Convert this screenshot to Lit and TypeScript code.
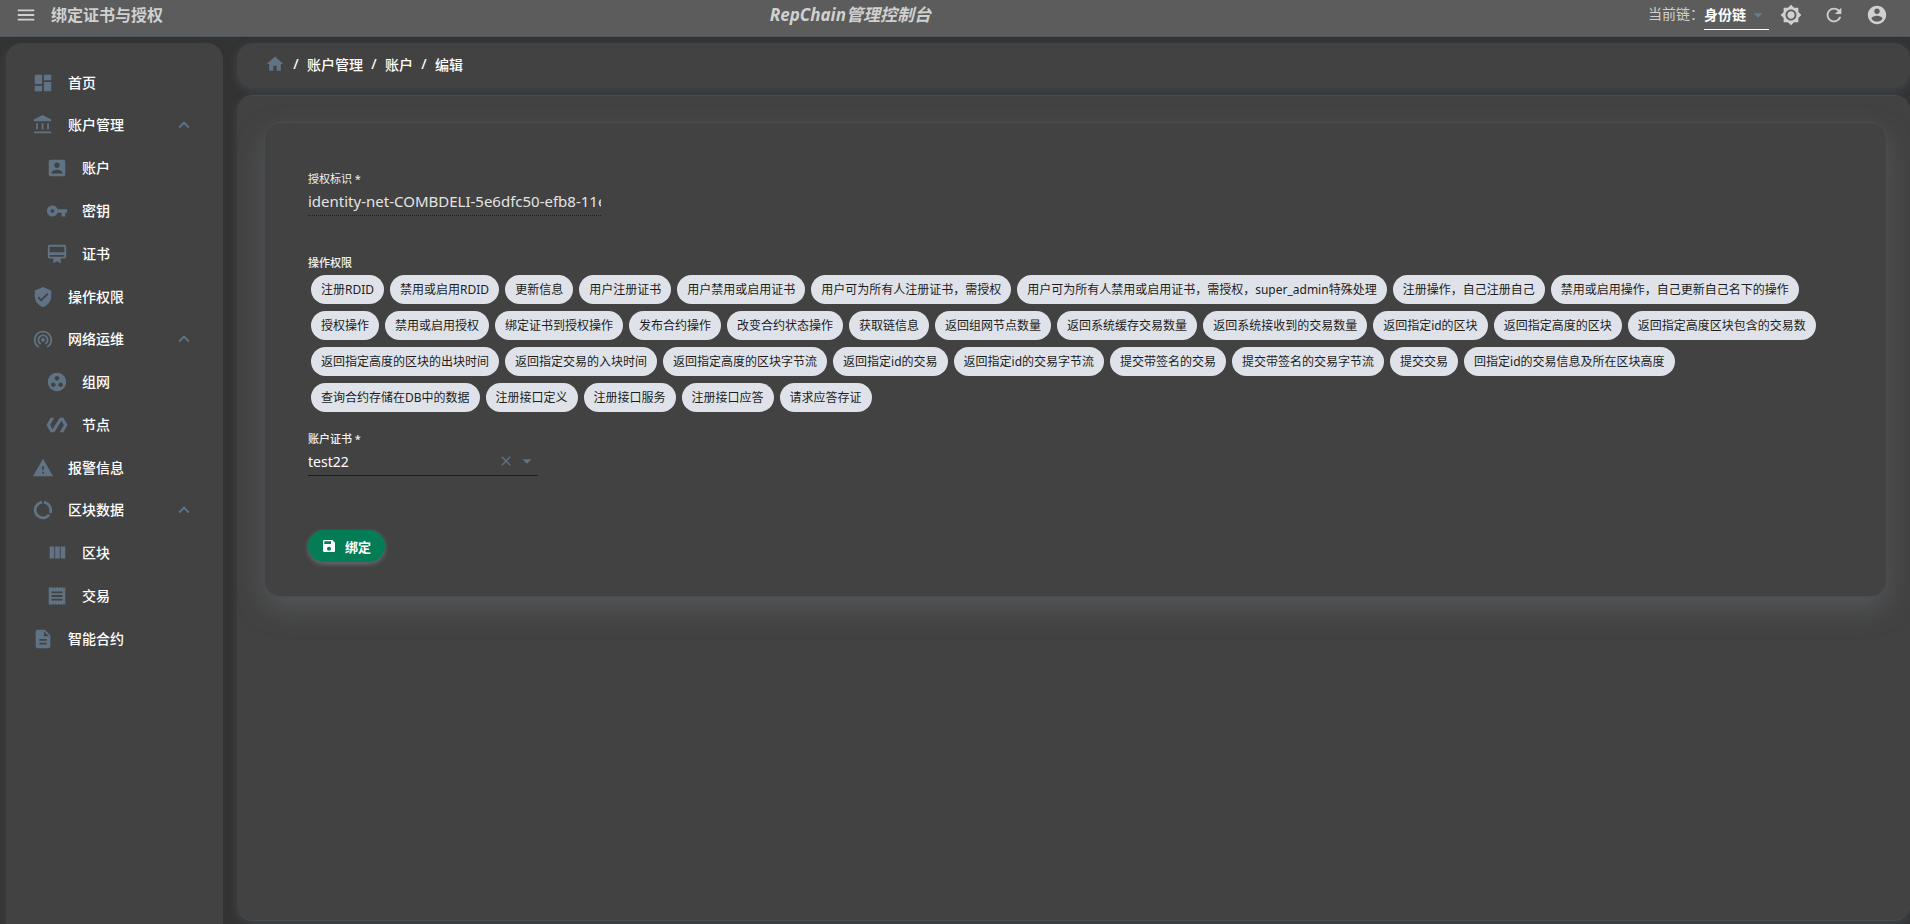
import { LitElement, html, css, svg, nothing } from "lit";
import { customElement, property, state } from "lit/decorators.js";

const ICONS: Record<string, string> = {
  menu: "M3 18h18v-2H3v2zm0-5h18v-2H3v2zm0-7v2h18V6H3z",
  home: "M10 20v-6h4v6h5v-8h3L12 3 2 12h3v8z",
  dashboard: "M3 13h8V3H3v10zm0 8h8v-6H3v6zm10 0h8V11h-8v10zm0-18v6h8V3h-8z",
  bank: "M6.5 10h-2v7h2v-7zm6 0h-2v7h2v-7zm8.5 9H2v2h19v-2zm-2.5-9h-2v7h2v-7zM11.5 1L2 6v2h19V6l-9.5-5z",
  accountBox: "M3 5v14c0 1.1.89 2 2 2h14c1.1 0 2-.9 2-2V5c0-1.1-.9-2-2-2H5c-1.11 0-2 .9-2 2zm12 4c0 1.66-1.34 3-3 3s-3-1.34-3-3 1.34-3 3-3 3 1.34 3 3zm-9 8c0-2 4-3.1 6-3.1s6 1.1 6 3.1v1H6v-1z",
  key: "M12.65 10C11.83 7.67 9.61 6 7 6c-3.31 0-6 2.69-6 6s2.69 6 6 6c2.61 0 4.83-1.67 5.65-4H17v4h4v-4h2v-4H12.65zM7 14c-1.1 0-2-.9-2-2s.9-2 2-2 2 .9 2 2-.9 2-2 2z",
  certificate: "M20 2H4c-1.11 0-2 .89-2 2v11c0 1.11.89 2 2 2h4v5l4-2 4 2v-5h4c1.11 0 2-.89 2-2V4c0-1.11-.89-2-2-2zm0 13H4v-2h16v2zm0-5H4V4h16v6z",
  shield: "M12 1L3 5v6c0 5.55 3.84 10.74 9 12 5.16-1.26 9-6.45 9-12V5l-9-4zm-2 16l-4-4 1.41-1.41L10 14.17l6.59-6.59L18 9l-8 8z",
  tethering: "M12 11c-1.1 0-2 .9-2 2s.9 2 2 2 2-.9 2-2-.9-2-2-2zm6 2c0-3.31-2.69-6-6-6s-6 2.69-6 6c0 2.22 1.21 4.15 3 5.19l1-1.74c-1.19-.7-2-1.97-2-3.45 0-2.21 1.79-4 4-4s4 1.79 4 4c0 1.48-.81 2.75-2 3.45l1 1.74c1.79-1.04 3-2.97 3-5.19zM12 3C6.48 3 2 7.48 2 13c0 3.7 2.01 6.92 4.99 8.65l1-1.73C5.61 18.53 4 15.96 4 13c0-4.42 3.58-8 8-8s8 3.58 8 8c0 2.96-1.61 5.53-4 6.92l1 1.73c2.99-1.73 5-4.95 5-8.65 0-5.52-4.48-10-10-10z",
  groupWork: "M12 2C6.48 2 2 6.48 2 12s4.48 10 10 10 10-4.48 10-10S17.52 2 12 2zM8 17.5c-1.38 0-2.5-1.12-2.5-2.5s1.12-2.5 2.5-2.5 2.5 1.12 2.5 2.5-1.12 2.5-2.5 2.5zM9.5 8c0-1.38 1.12-2.5 2.5-2.5s2.5 1.12 2.5 2.5-1.12 2.5-2.5 2.5S9.5 9.38 9.5 8zm6.5 9.5c-1.38 0-2.5-1.12-2.5-2.5s1.12-2.5 2.5-2.5 2.5 1.12 2.5 2.5-1.12 2.5-2.5 2.5z",
  polymer: "M19 4h-4L7.11 16.63 4.5 12 9 4H5L.5 12 5 20h4l7.89-12.63L19.5 12 15 20h4l4.5-8z",
  warning: "M1 21h22L12 2 1 21zm12-3h-2v-2h2v2zm0-4h-2v-4h2v4z",
  dataUsage: "M13 2.05v3.03c3.39.49 6 3.39 6 6.92 0 .9-.18 1.75-.48 2.54l2.6 1.53c.56-1.24.88-2.62.88-4.07 0-5.18-3.95-9.45-9-9.95zM12 19c-3.87 0-7-3.13-7-7 0-3.53 2.61-6.43 6-6.92V2.05c-5.06.5-9 4.76-9 9.95 0 5.52 4.47 10 9.99 10 3.31 0 6.24-1.61 8.06-4.09l-2.6-1.53C16.17 17.98 14.21 19 12 19z",
  columns: "M10 18h5V5h-5v13zm-6 0h5V5H4v13zM16 5v13h5V5h-5z",
  receipt: "M18 17H6v-2h12v2zm0-4H6v-2h12v2zm0-4H6V7h12v2zM3 22l1.5-1.5L6 22l1.5-1.5L9 22l1.5-1.5L12 22l1.5-1.5L15 22l1.5-1.5L18 22l1.5-1.5L21 22V2l-1.5 1.5L18 2l-1.5 1.5L15 2l-1.5 1.5L12 2l-1.5 1.5L9 2 7.5 3.5 6 2 4.5 3.5 3 2v20z",
  description: "M14 2H6c-1.1 0-1.99.9-1.99 2L4 20c0 1.1.89 2 1.99 2H18c1.1 0 2-.9 2-2V8l-6-6zm2 16H8v-2h8v2zm0-4H8v-2h8v2zm-3-5V3.5L18.5 9H13z",
  brightness: "M20 8.69V4h-4.69L12 .69 8.69 4H4v4.69L.69 12 4 15.31V20h4.69L12 23.31 15.31 20H20v-4.69L23.31 12 20 8.69zM12 18c-3.31 0-6-2.69-6-6s2.69-6 6-6 6 2.69 6 6-2.69 6-6 6zm0-10c-2.21 0-4 1.79-4 4s1.79 4 4 4 4-1.79 4-4-1.79-4-4-4z",
  refresh: "M17.65 6.35C16.2 4.9 14.21 4 12 4c-4.42 0-7.99 3.58-7.99 8s3.57 8 7.99 8c3.73 0 6.84-2.55 7.73-6h-2.08c-.82 2.33-3.04 4-5.65 4-3.31 0-6-2.69-6-6s2.69-6 6-6c1.66 0 3.14.69 4.22 1.78L13 11h7V4l-2.35 2.35z",
  account: "M12 2C6.48 2 2 6.48 2 12s4.48 10 10 10 10-4.48 10-10S17.52 2 12 2zm0 3c1.66 0 3 1.34 3 3s-1.34 3-3 3-3-1.34-3-3 1.34-3 3-3zm0 14.2c-2.5 0-4.71-1.28-6-3.22.03-1.99 4-3.08 6-3.08 1.99 0 5.97 1.09 6 3.08-1.29 1.94-3.5 3.22-6 3.22z",
  expandLess: "M12 8l-6 6 1.41 1.41L12 10.83l4.59 4.58L18 14z",
  dropDown: "M7 10l5 5 5-5z",
  close: "M19 6.41L17.59 5 12 10.59 6.41 5 5 6.41 10.59 12 5 17.59 6.41 19 12 13.41 17.59 19 19 17.59 13.41 12z",
  save: "M17 3H5c-1.11 0-2 .9-2 2v14c0 1.1.89 2 2 2h14c1.1 0 2-.9 2-2V7l-4-4zm-5 16c-1.66 0-3-1.34-3-3s1.34-3 3-3 3 1.34 3 3-1.34 3-3 3zm3-10H5V5h10v4z",
};

@customElement("rc-icon")
class RcIcon extends LitElement {
  @property() name = "";

  static styles = css`
    :host {
      display: block;
      flex: none;
      width: 22px;
      height: 22px;
    }
    svg {
      display: block;
      width: 100%;
      height: 100%;
      fill: currentColor;
    }
  `;

  render() {
    return html`<svg viewBox="0 0 24 24" aria-hidden="true">
      ${svg`<path d=${ICONS[this.name] ?? ""}></path>`}
    </svg>`;
  }
}

interface NavItem {
  text: string;
  icon: string;
  children?: NavItem[];
}

const NAV: NavItem[] = [
  { text: "首页", icon: "dashboard" },
  {
    text: "账户管理",
    icon: "bank",
    children: [
      { text: "账户", icon: "accountBox" },
      { text: "密钥", icon: "key" },
      { text: "证书", icon: "certificate" },
    ],
  },
  { text: "操作权限", icon: "shield" },
  {
    text: "网络运维",
    icon: "tethering",
    children: [
      { text: "组网", icon: "groupWork" },
      { text: "节点", icon: "polymer" },
    ],
  },
  { text: "报警信息", icon: "warning" },
  {
    text: "区块数据",
    icon: "dataUsage",
    children: [
      { text: "区块", icon: "columns" },
      { text: "交易", icon: "receipt" },
    ],
  },
  { text: "智能合约", icon: "description" },
];

@customElement("rc-sidebar")
class RcSidebar extends LitElement {
  @state() private closed: string[] = [];

  static styles = css`
    :host {
      display: block;
      box-sizing: border-box;
      padding: 18px 0;
      border-radius: 16px 16px 0 0;
      background: #424242;
      box-shadow: -4px 4px 8px rgba(96, 112, 128, 0.15);
    }
    ul {
      margin: 0;
      padding: 0;
      list-style: none;
    }
    .row {
      display: flex;
      align-items: center;
      box-sizing: border-box;
      width: 100%;
      height: 43px;
      padding: 0 28px 0 26px;
      border: 0;
      background: none;
      color: #fff;
      font: inherit;
      text-align: left;
      text-decoration: none;
      cursor: pointer;
    }
    .row.group {
      height: 42px;
    }
    .row.child {
      padding-left: 40px;
    }
    .glyph,
    .chevron {
      color: #607384;
    }
    .text {
      flex: 1;
      padding-left: 14px;
      line-height: 20px;
    }
  `;

  private toggle(text: string) {
    this.closed = this.closed.includes(text)
      ? this.closed.filter((t) => t !== text)
      : [...this.closed, text];
  }

  private link(item: NavItem, kind = "") {
    return html`<a class="row ${kind}" href="#">
      <rc-icon class="glyph" name=${item.icon}></rc-icon>
      <span class="text">${item.text}</span>
    </a>`;
  }

  render() {
    return html`<nav>
      <ul>
        ${NAV.map((item) => {
          if (!item.children) return html`<li>${this.link(item)}</li>`;
          const open = !this.closed.includes(item.text);
          return html`<li>
            <button class="row group" type="button" aria-expanded=${open} @click=${() => this.toggle(item.text)}>
              <rc-icon class="glyph" name=${item.icon}></rc-icon>
              <span class="text">${item.text}</span>
              <rc-icon class="chevron" name="expandLess"></rc-icon>
            </button>
            ${open
              ? html`<ul>
                  ${item.children.map((c) => html`<li>${this.link(c, "child")}</li>`)}
                </ul>`
              : nothing}
          </li>`;
        })}
      </ul>
    </nav>`;
  }
}

const OPERATIONS = [
  "注册RDID",
  "禁用或启用RDID",
  "更新信息",
  "用户注册证书",
  "用户禁用或启用证书",
  "用户可为所有人注册证书，需授权",
  "用户可为所有人禁用或启用证书，需授权，super_admin特殊处理",
  "注册操作，自己注册自己",
  "禁用或启用操作，自己更新自己名下的操作",
  "授权操作",
  "禁用或启用授权",
  "绑定证书到授权操作",
  "发布合约操作",
  "改变合约状态操作",
  "获取链信息",
  "返回组网节点数量",
  "返回系统缓存交易数量",
  "返回系统接收到的交易数量",
  "返回指定id的区块",
  "返回指定高度的区块",
  "返回指定高度区块包含的交易数",
  "返回指定高度的区块的出块时间",
  "返回指定交易的入块时间",
  "返回指定高度的区块字节流",
  "返回指定id的交易",
  "返回指定id的交易字节流",
  "提交带签名的交易",
  "提交带签名的交易字节流",
  "提交交易",
  "回指定id的交易信息及所在区块高度",
  "查询合约存储在DB中的数据",
  "注册接口定义",
  "注册接口服务",
  "注册接口应答",
  "请求应答存证",
];

@customElement("rc-bind-form")
class RcBindForm extends LitElement {
  @state() private cert = "test22";

  static styles = css`
    :host {
      display: block;
      box-sizing: border-box;
      padding: 48px 43px 34px;
      border: 1px solid #4a4d50;
      border-radius: 16px;
      background: #424242;
      box-shadow: 0 12px 28px rgba(112, 118, 126, 0.4);
    }
    .field {
      display: flex;
      flex-direction: column;
    }
    .auth {
      width: 293px;
      max-width: 100%;
    }
    .label {
      font-size: 11px;
      line-height: 16px;
      color: #f2f2f2;
    }
    .auth .label {
      font-weight: 400;
    }
    .value {
      box-sizing: border-box;
      width: 100%;
      height: 29px;
      padding: 0;
      border: 0;
      outline: 0;
      background: none;
      color: #fff;
      font: inherit;
      font-size: 15px;
      font-weight: 400;
    }
    .auth .value {
      border-bottom: 1px dotted #1f1f1f;
      color: #e4e4e4;
    }
    .ops {
      margin-top: 39px;
    }
    .chips {
      display: flex;
      flex-wrap: wrap;
      gap: 7px 6px;
      margin: 4px 0 0;
      padding: 0 3px;
      list-style: none;
    }
    .chip {
      padding: 0 10px;
      border-radius: 15px;
      background: #dfe3e9;
      color: #1c1c1c;
      font-size: 12px;
      font-weight: 400;
      line-height: 29px;
    }
    .cert {
      width: 230px;
      max-width: 100%;
      margin-top: 19px;
    }
    .picker {
      display: flex;
      align-items: center;
      border-bottom: 1px solid #1c1c1c;
      color: #607384;
    }
    .picker .value {
      flex: 1;
      width: auto;
      min-width: 0;
      height: 28px;
      font-size: 14px;
      appearance: none;
    }
    .clear {
      padding: 0;
      border: 0;
      background: none;
      color: inherit;
      cursor: pointer;
    }
    .clear rc-icon {
      width: 16px;
      height: 16px;
    }
    .picker .arrow {
      margin-left: 2px;
    }
    .submit {
      display: flex;
      align-items: center;
      gap: 8px;
      height: 32px;
      margin-top: 54px;
      padding: 0 14px 0 13px;
      border: 0;
      border-radius: 16px;
      background: #047d57;
      color: #fff;
      font: inherit;
      font-size: 13px;
      font-weight: 700;
      box-shadow: 0 2px 5px rgba(130, 140, 150, 0.6);
      cursor: pointer;
    }
    .submit rc-icon {
      width: 16px;
      height: 16px;
    }
  `;

  render() {
    return html`<form @submit=${(e: Event) => e.preventDefault()}>
      <div class="field auth">
        <label class="label" for="auth-id">授权标识 *</label>
        <input
          class="value"
          id="auth-id"
          type="text"
          readonly
          value="identity-net-COMBDELI-5e6dfc50-efb8-11ec"
        />
      </div>
      <div class="field ops">
        <span class="label" id="ops-label">操作权限</span>
        <ul class="chips" aria-labelledby="ops-label">
          ${OPERATIONS.map((op) => html`<li class="chip">${op}</li>`)}
        </ul>
      </div>
      <div class="field cert">
        <label class="label" for="cert">账户证书 *</label>
        <div class="picker">
          <select
            class="value"
            id="cert"
            .value=${this.cert}
            @change=${(e: Event) => (this.cert = (e.target as HTMLSelectElement).value)}
          >
            <option value="test22">test22</option>
            <option value=""></option>
          </select>
          <button class="clear" type="button" aria-label="清除" @click=${() => (this.cert = "")}>
            <rc-icon name="close"></rc-icon>
          </button>
          <rc-icon class="arrow" name="dropDown"></rc-icon>
        </div>
      </div>
      <button class="submit" type="submit"><rc-icon name="save"></rc-icon>绑定</button>
    </form>`;
  }
}

@customElement("app-root")
class AppRoot extends LitElement {
  static styles = css`
    :host {
      display: flex;
      flex-direction: column;
      height: 100vh;
      overflow: hidden;
      background: #333;
      color: #fff;
      font-family: "Noto Sans", "Noto Sans CJK SC", sans-serif;
      font-size: 14px;
      font-weight: 500;
    }
    .bar {
      z-index: 1;
      display: flex;
      flex: none;
      align-items: center;
      box-sizing: border-box;
      height: 37px;
      padding: 0 22px 7px 15px;
      border-bottom: 1px solid #4c565e;
      background: #5c5c5c;
      color: #d0d0d0;
    }
    .icon-button {
      padding: 0;
      border: 0;
      background: none;
      color: inherit;
      cursor: pointer;
    }
    .page,
    .brand {
      margin: 0;
      font-size: 16px;
      font-weight: 700;
      line-height: 24px;
      white-space: nowrap;
    }
    .page {
      padding-left: 14px;
    }
    .brand {
      font-size: 17px;
      font-style: italic;
    }
    .space-before {
      flex: 11;
    }
    .space-after {
      flex: 13;
    }
    .chain {
      display: flex;
      align-items: center;
      padding-bottom: 3px;
      font-weight: 400;
    }
    .chain-select {
      display: flex;
      align-items: center;
      width: 65px;
      margin-bottom: -7px;
      padding-bottom: 3px;
      border-bottom: 1px solid #fff;
      color: #607d94;
    }
    .chain-select select {
      flex: 1;
      min-width: 0;
      height: 22px;
      padding: 0;
      border: 0;
      outline: 0;
      appearance: none;
      background: none;
      color: #fff;
      font: inherit;
      font-weight: 700;
    }
    .tools {
      display: flex;
      align-items: center;
      gap: 21px;
      padding-left: 11px;
    }
    .body {
      display: grid;
      flex: 1;
      grid-template-columns: 217px minmax(0, 1fr);
      gap: 14px;
      min-height: 0;
      padding: 6px 0 0 6px;
    }
    .content {
      display: flex;
      flex-direction: column;
      gap: 7px;
      min-width: 0;
      padding-bottom: 3px;
    }
    .crumbs,
    .panel {
      box-sizing: border-box;
      border-radius: 16px;
      background: #424242;
      box-shadow: 0 3px 10px rgba(96, 112, 128, 0.3);
    }
    .crumbs ol {
      display: flex;
      align-items: center;
      box-sizing: border-box;
      height: 45px;
      margin: 0;
      padding: 0 0 4px 28px;
      list-style: none;
    }
    .crumbs li {
      display: flex;
      align-items: center;
    }
    .crumbs li + li::before {
      content: "/";
      width: 22px;
      text-align: center;
    }
    .crumbs a {
      color: inherit;
      text-decoration: none;
    }
    .crumbs rc-icon {
      width: 20px;
      height: 20px;
      color: #607384;
    }
    .panel {
      flex: 1;
      min-height: 0;
      padding: 26px 23px 24px 27px;
      overflow: hidden;
      border: solid #464b4f;
      border-width: 1px 0;
    }
  `;

  render() {
    return html`
      <header class="bar">
        <button class="icon-button" type="button" aria-label="菜单"><rc-icon name="menu"></rc-icon></button>
        <h1 class="page">绑定证书与授权</h1>
        <span class="space-before"></span>
        <p class="brand">RepChain管理控制台</p>
        <span class="space-after"></span>
        <div class="chain">
          <label for="chain">当前链：</label>
          <div class="chain-select">
            <select id="chain">
              <option>身份链</option>
            </select>
            <rc-icon name="dropDown"></rc-icon>
          </div>
        </div>
        <div class="tools">
          <button class="icon-button" type="button" aria-label="主题"><rc-icon name="brightness"></rc-icon></button>
          <button class="icon-button" type="button" aria-label="刷新"><rc-icon name="refresh"></rc-icon></button>
          <button class="icon-button" type="button" aria-label="用户"><rc-icon name="account"></rc-icon></button>
        </div>
      </header>
      <div class="body">
        <rc-sidebar></rc-sidebar>
        <main class="content">
          <nav class="crumbs">
            <ol>
              <li><a href="#" aria-label="首页"><rc-icon name="home"></rc-icon></a></li>
              <li><a href="#">账户管理</a></li>
              <li><a href="#">账户</a></li>
              <li>编辑</li>
            </ol>
          </nav>
          <section class="panel"><rc-bind-form></rc-bind-form></section>
        </main>
      </div>
    `;
  }
}
